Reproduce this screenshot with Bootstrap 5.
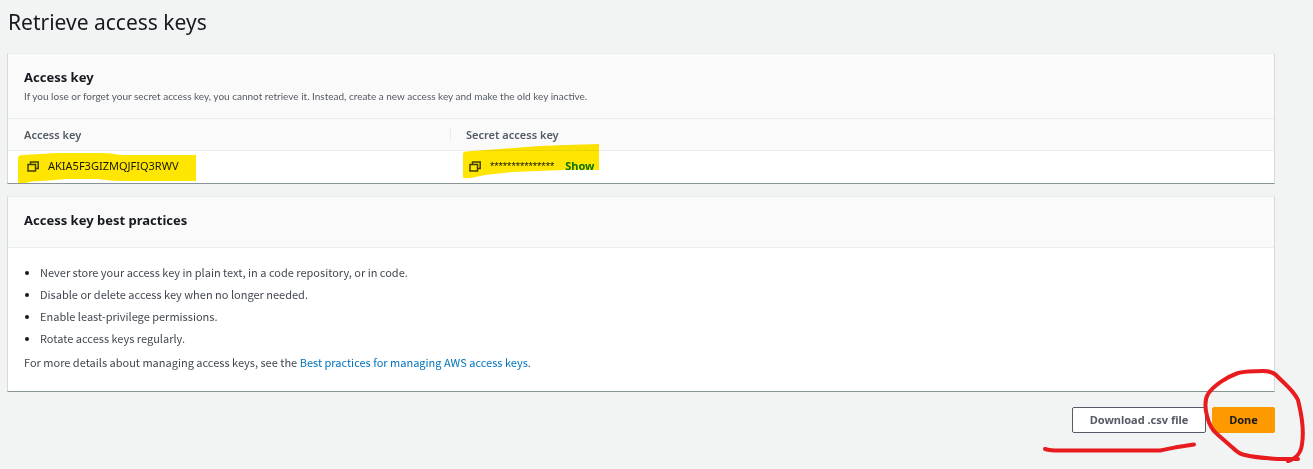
<!DOCTYPE html>
<html lang="en">
<head>
<meta charset="utf-8">
<meta name="viewport" content="width=device-width, initial-scale=1">
<title>Retrieve access keys</title>
<link href="https://cdn.jsdelivr.net/npm/bootstrap@5.3.0/dist/css/bootstrap.min.css" rel="stylesheet">
<style>
  body { background: #f2f4f4; color: #16191f; font: 11px/18px "Noto Sans CJK SC", "Noto Sans", sans-serif; }
  .page { padding: 8px 38px 36px 7px; }
  .page-title { font: 400 21px/28px "Noto Sans", sans-serif; margin: 0 0 17px; padding-left: 1px; }
  .panel { background: #fff; border: 1px solid #eaeded; border-left-color: #d5dbdb; border-right-color: #d5dbdb; border-bottom-color: #879596; margin-bottom: 12px; }
  .panel-head { background: #fafafa; border-bottom: 1px solid #eaeded; padding: 13px 16px; }
  .panel-head-single { padding-bottom: 17px; }
  .panel-title { font: 700 13px/20px "Noto Sans", sans-serif; margin: 0; }
  .panel-note { font: 10px/18px Lato, sans-serif; color: #545b64; margin: 0; }
  .key-table { table-layout: fixed; margin: 0; width: 100%; line-height: 18px; }
  .key-table th { background: #fafafa; color: #545b64; font-family: "Noto Sans", sans-serif; font-weight: 600; padding: 7px 16px 6px; border-bottom: 1px solid #eaeded; position: relative; }
  .key-table th:first-child { width: 442px; }
  .key-table th + th::before { content: ""; position: absolute; left: 0; top: 8px; bottom: 8px; border-left: 1px solid #eaeded; }
  .key-table td { padding: 6px 16px 8px 19px; position: relative; font-family: "Noto Sans", sans-serif; }
  .copy-btn { border: 0; background: none; padding: 0; width: 13px; height: 12px; color: #414750; display: flex; }
  .stars { font-family: "Liberation Sans", sans-serif; }
  .show-btn { border: 0; background: none; padding: 0; margin-left: 11px; color: #0b7d12; font-weight: 700; }
  .marker { position: absolute; mix-blend-mode: multiply; pointer-events: none; z-index: 1; fill: #ffe600; }
  .marker-id { left: 10px; top: 2px; }
  .marker-secret { left: 13px; top: -7px; }
  .panel-body { padding: 13px 16px 20px; color: #414750; }
  .tips { padding-left: 16px; margin: 0 0 4px; }
  .tips li { line-height: 22px; }
  .tips li::marker { color: #16191f; }
  .panel-body a { color: #0073bb; text-decoration: none; }
  .actions { margin-top: 15px; gap: 6px; }
  .action-btn { --bs-btn-font-family: "Noto Sans", sans-serif; --bs-btn-border-radius: 2px; --bs-btn-font-size: 11px; --bs-btn-font-weight: 700; --bs-btn-padding-x: 16px; --bs-btn-padding-y: 3px; line-height: 18px; }
  .csv-btn { width: 134px; background: #fff; color: #545b64; border-color: #545b64; }
  .done-btn { width: 63px; background: #ff9900; color: #16191f; border-color: #ff9900; }
  .pen { position: absolute; pointer-events: none; fill: none; stroke: #e81b1e; stroke-width: 4; stroke-linecap: round; stroke-linejoin: round; }
  .pen-line { left: -30px; top: 33px; }
  .pen-circle { right: -31px; top: -41px; }
</style>
</head>
<body>
<main class="page">
  <h1 class="page-title">Retrieve access keys</h1>

  <section class="panel">
    <div class="panel-head">
      <h2 class="panel-title">Access key</h2>
      <p class="panel-note">If you lose or forget your secret access key, you cannot retrieve it. Instead, create a new access key and make the old key inactive.</p>
    </div>
    <table class="key-table">
      <thead><tr><th scope="col">Access key</th><th scope="col">Secret access key</th></tr></thead>
      <tbody>
        <tr>
          <td>
            <div class="d-flex align-items-center">
              <button type="button" class="copy-btn me-2" aria-label="Copy access key"><svg width="12" height="12" viewBox="0 0 12 12" fill="none" stroke="currentColor" stroke-width="1.5"><path d="M1 4.500h7.500v6.500H1zM3.500 4.500V2H11.200V8.500H8.500"/></svg></button>
              <span>AKIA5F3GIZMQJFIQ3RWV</span>
            </div>
            <svg class="marker marker-id" width="178" height="30" viewBox="0 0 178 30"><path d="M0 4Q1 2 5 2L39 0H84Q92 0 103 2H178V28H104Q92 28 80 26H48L24 28Q12 28 8 30H0Z"/></svg>
          </td>
          <td>
            <div class="d-flex align-items-center">
              <button type="button" class="copy-btn me-2" aria-label="Copy secret access key"><svg width="12" height="12" viewBox="0 0 12 12" fill="none" stroke="currentColor" stroke-width="1.5"><path d="M1 4.500h7.500v6.500H1zM3.500 4.500V2H11.200V8.500H8.500"/></svg></button>
              <span class="stars">***************</span>
              <button type="button" class="show-btn">Show</button>
            </div>
            <svg class="marker marker-secret" width="136" height="34" viewBox="0 0 136 34"><path d="M0 9Q1 7 9 7L51 4 76 2 104 1 136 0V26H99L50 28 22 31 8 34H0Z"/></svg>
          </td>
        </tr>
      </tbody>
    </table>
  </section>

  <section class="panel">
    <div class="panel-head panel-head-single">
      <h2 class="panel-title">Access key best practices</h2>
    </div>
    <div class="panel-body">
      <ul class="tips">
        <li>Never store your access key in plain text, in a code repository, or in code.</li>
        <li>Disable or delete access key when no longer needed.</li>
        <li>Enable least-privilege permissions.</li>
        <li>Rotate access keys regularly.</li>
      </ul>
      <p class="m-0">For more details about managing access keys, see the <a href="#">Best practices for managing AWS access keys</a>.</p>
    </div>
  </section>

  <div class="actions d-flex justify-content-end">
    <div class="position-relative">
      <button type="button" class="btn action-btn csv-btn text-nowrap">Download .csv file</button>
      <svg class="pen pen-line" width="156" height="14" viewBox="0 0 156 14"><path d="M3 9Q10 11 22 10.500H118C126 9 134 7 142 6L152 4.500"/></svg>
    </div>
    <div class="position-relative">
      <button type="button" class="btn action-btn done-btn">Done</button>
      <svg class="pen pen-circle" width="104" height="98" viewBox="0 0 104 98"><path d="M61 5C52 5 44 5 36 7C25 11 12 19 6 28C3 33 3 42 5 50C7 58 10 64 15 68L31 82Q37 88 43 89C54 92 66 92 75 93H96M86 95C95 92 99 87 100 78C103 60 98 43 96 34C92 25 84 19 76 11C73 7 69 5 61 5"/></svg>
    </div>
  </div>
</main>
<script src="https://cdn.jsdelivr.net/npm/bootstrap@5.3.0/dist/js/bootstrap.bundle.min.js"></script>
</body>
</html>
